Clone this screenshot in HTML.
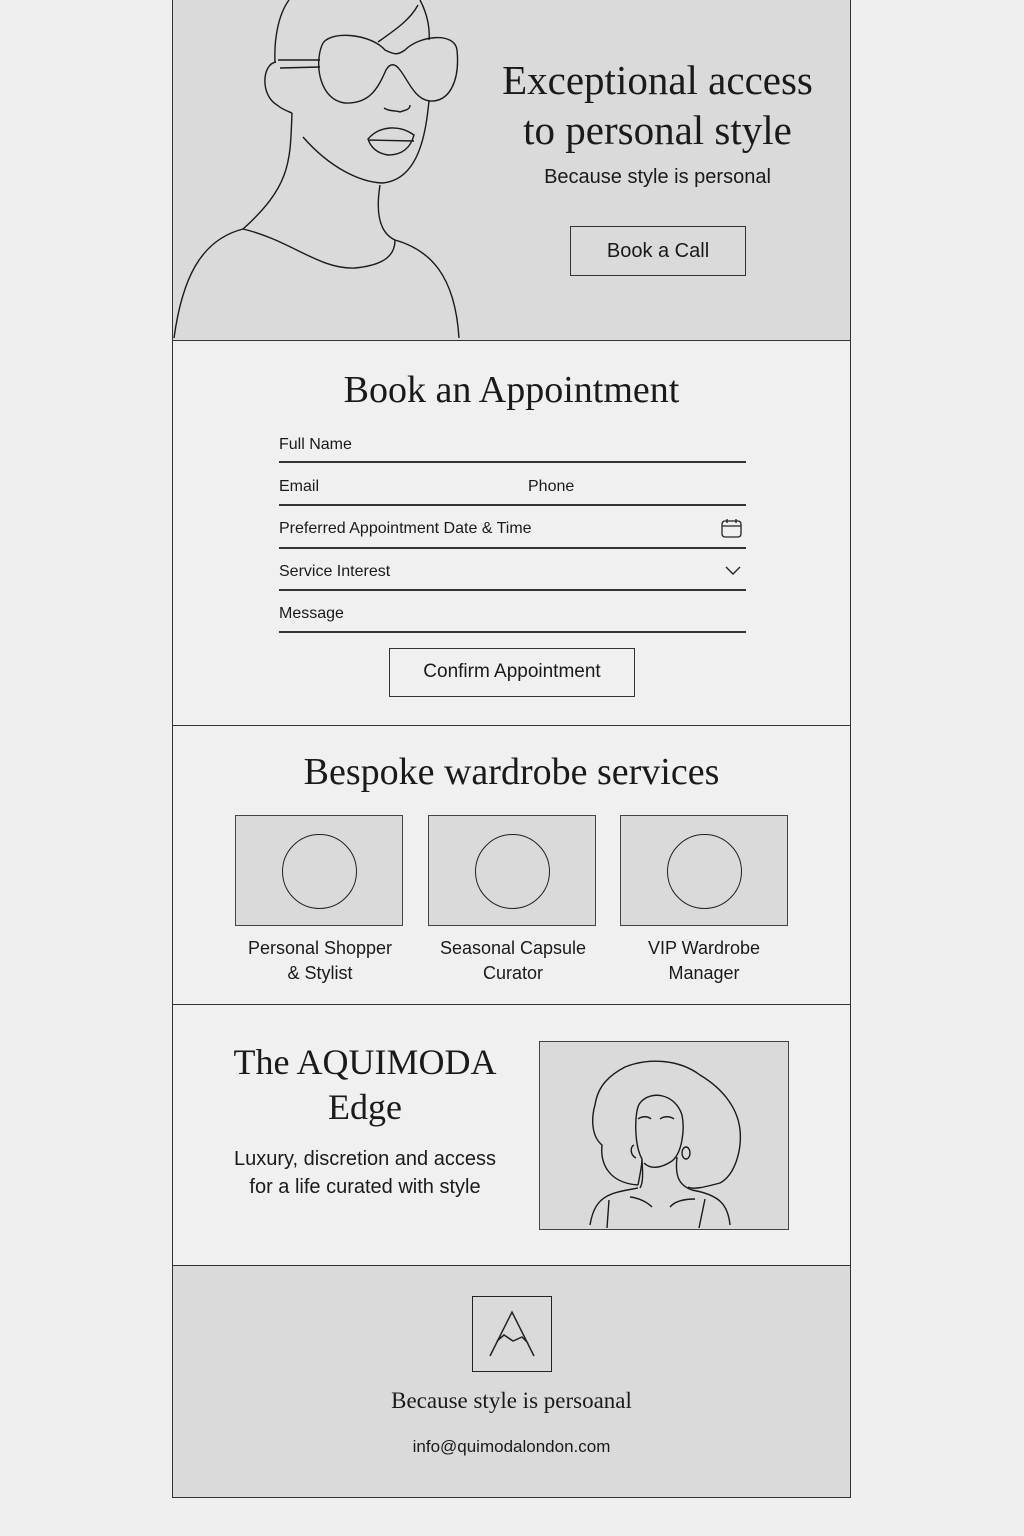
<!DOCTYPE html>
<html><head><meta charset="utf-8"><style>
*{margin:0;padding:0;box-sizing:border-box}
body{width:1024px;height:1536px;background:#efefef;position:relative;overflow:hidden;font-family:"Liberation Sans",sans-serif;color:#1a1a1a}
.a{position:absolute}
.serif{font-family:"Liberation Serif",serif}
.sec{position:absolute;left:172px;width:679px;border:1.5px solid #333}
.c{text-align:center}
.lab{position:absolute;font-size:16px}
.line{position:absolute;left:279px;width:467px;height:1.5px;background:#333}
.card{position:absolute;top:815px;width:168px;height:111px;background:#dadada;border:1.5px solid #444}
.card div{position:absolute;left:46px;top:18px;width:75px;height:75px;border:1.5px solid #222;border-radius:50%}
.cl{position:absolute;top:936px;font-size:18px;text-align:center;line-height:25px;width:200px}
</style></head><body>
<div class="sec" style="top:0;height:341px;background:#dadada;border-top:none"></div>
<div class="sec" style="top:340px;height:386px;background:#f0f0f0"></div>
<div class="sec" style="top:725px;height:280px;background:#f0f0f0"></div>
<div class="sec" style="top:1004px;height:262px;background:#f0f0f0"></div>
<div class="sec" style="top:1265px;height:233px;background:#dadada"></div>

<svg class="a" style="left:0;top:0" width="1024" height="345" fill="none" stroke="#1a1a1a" stroke-width="1.4">
<path d="M289 0 C278 15 274 40 275 62"/>
<path d="M420 0 C428 15 430 30 429 40"/>
<path d="M276 62 C262 64 260 95 277 105 C283 110 290 112 292 113"/>
<path d="M278 60 L320 60 M280 68 L320 67"/>
<path d="M322 45 C328 30 370 33 385 50 C395 55 398 55 405 50 C420 35 455 32 457 50 C460 80 450 102 430 101 C415 100 408 80 400 70 C395 63 390 63 386 70 C378 88 370 104 345 103 C320 100 314 65 322 45Z"/>
<path d="M378 42 C395 30 410 20 418 5"/>
<path d="M384 108 C390 112 395 110 400 112 C405 110 410 110 410 105"/>
<path d="M368 139 C380 125 400 125 414 135 C410 150 400 155 388 155 C375 153 370 145 368 139Z M368 140 L414 141"/>
<path d="M303 137 C330 168 360 182 382 183 C420 180 426 130 429 101"/>
<path d="M292 113 C290 160 292 185 243 229"/>
<path d="M380 185 C376 210 378 232 395 240"/>
<path d="M174 338 C182 280 200 240 243 229 C290 240 320 270 355 268 C385 265 395 255 395 240 C430 250 455 275 459 338"/>
</svg>

<div class="a serif c" style="left:480px;width:355px;top:55px;font-size:41px;line-height:50px">Exceptional access<br>to personal style</div>
<div class="a c" style="left:480px;width:355px;top:166px;font-size:20px">Because style is personal</div>
<div class="a c" style="left:570px;top:226px;width:176px;height:50px;border:1.5px solid #333;font-size:20px;line-height:48px">Book a Call</div>

<div class="a serif c" style="left:172px;width:679px;top:368px;font-size:38px">Book an Appointment</div>
<div class="lab" style="left:279px;top:436px">Full Name</div><div class="line" style="top:461px"></div>
<div class="lab" style="left:279px;top:478px">Email</div><div class="lab" style="left:528px;top:478px">Phone</div><div class="line" style="top:504px"></div>
<div class="lab" style="left:279px;top:520px">Preferred Appointment Date &amp; Time</div>
<svg class="a" style="left:720px;top:517px" width="24" height="22" fill="none" stroke="#222" stroke-width="1.3"><rect x="2" y="4" width="19" height="16" rx="3"/><path d="M2 9H21M7 2V6M16 2V6"/></svg>
<div class="line" style="top:547px"></div>
<div class="lab" style="left:279px;top:563px">Service Interest</div>
<svg class="a" style="left:724px;top:565px" width="18" height="12" fill="none" stroke="#222" stroke-width="1.4"><path d="M2 2L9 9L16 2"/></svg>
<div class="line" style="top:589px"></div>
<div class="lab" style="left:279px;top:605px">Message</div><div class="line" style="top:631px"></div>
<div class="a c" style="left:389px;top:648px;width:246px;height:49px;border:1.5px solid #333;font-size:19px;line-height:46px">Confirm Appointment</div>

<div class="a serif c" style="left:172px;width:679px;top:750px;font-size:38px">Bespoke wardrobe services</div>
<div class="card" style="left:235px"><div></div></div>
<div class="card" style="left:428px"><div></div></div>
<div class="card" style="left:620px"><div></div></div>
<div class="cl" style="left:220px">Personal Shopper<br>&amp; Stylist</div>
<div class="cl" style="left:413px">Seasonal Capsule<br>Curator</div>
<div class="cl" style="left:604px">VIP Wardrobe<br>Manager</div>

<div class="a serif c" style="left:215px;width:300px;top:1040px;font-size:36px;line-height:45px">The AQUIMODA<br>Edge</div>
<div class="a c" style="left:215px;width:300px;top:1145px;font-size:20px;line-height:28px">Luxury, discretion and access<br>for a life curated with style</div>
<div class="a" style="left:539px;top:1041px;width:250px;height:189px;background:#dadada;border:1.5px solid #444"></div>
<svg class="a" style="left:530px;top:1035px" width="270" height="200" fill="none" stroke="#1a1a1a" stroke-width="1.4">
<path d="M108 150 C80 148 70 130 72 110 C60 100 62 80 65 70 C68 50 80 40 95 32 C120 22 150 25 170 40 C195 55 208 75 210 95 C212 115 205 140 190 148 C175 152 163 155 158 152"/>
<path d="M108 150 C110 140 112 130 112 124 C104 110 104 75 110 68 C120 55 145 58 152 80 C155 95 152 118 142 126 C130 134 120 134 114 128"/>
<path d="M112 125 C113 140 113 148 110 153 M147 122 C145 140 148 150 162 155"/>
<path d="M108 153 C80 158 65 160 60 190 M162 155 C190 160 198 170 200 190"/>
<path d="M79 165 L77 193 M175 164 L169 193"/>
<path d="M100 162 C110 163 118 168 122 172 M140 172 C145 166 155 164 165 164"/>
<path d="M108 84 C112 81 118 81 121 84 M130 84 C134 81 140 81 144 84"/>
<ellipse cx="156" cy="118" rx="4" ry="6"/><path d="M104 110 C100 112 100 120 106 123"/>
</svg>

<div class="a" style="left:472px;top:1296px;width:80px;height:76px;border:1.5px solid #222"></div>
<svg class="a" style="left:472px;top:1296px" width="80" height="76" fill="none" stroke="#222" stroke-width="1.5"><path d="M18 60L40 16L62 60M25 45L32 39L41 45L50 41L56 47"/></svg>
<div class="a serif c" style="left:172px;width:679px;top:1388px;font-size:23px">Because style is persoanal</div>
<div class="a c" style="left:172px;width:679px;top:1437px;font-size:17px">info@quimodalondon.com</div>
</body></html>
